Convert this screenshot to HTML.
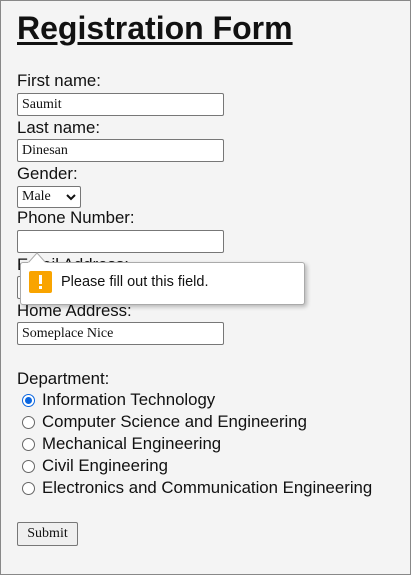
<!DOCTYPE html>
<html><head><style>
html,body{margin:0;padding:0}
body{width:409px;height:573px;border:1px solid #888;background:#f4f4f4;position:relative;overflow:hidden;font-family:"Liberation Sans",sans-serif;font-size:16.8px;color:#111}
.a{position:absolute;white-space:nowrap}
h1{position:absolute;left:16px;top:9px;margin:0;font-size:32px;font-weight:bold;text-decoration:underline;text-decoration-thickness:3px;text-underline-offset:3px}
.in{position:absolute;left:16px;height:21px;border:1px solid #777;border-radius:2px;background:#fff;font-family:"Liberation Serif",serif;font-size:14px;line-height:21px;padding-left:4px;box-sizing:content-box;width:201px}
.rad{position:absolute;left:21px;width:11px;height:11px;border:1px solid #666;border-radius:50%;background:#fff}
.rad.on{border-color:#0a66e0}
.rad.on::after{content:"";position:absolute;left:2px;top:2px;width:7px;height:7px;border-radius:50%;background:#0a66e0}
</style></head><body>
<h1>Registration Form</h1>
<div class="a" style="left:16px;top:70px">First name:</div>
<div class="in" style="top:92px">Saumit</div>
<div class="a" style="left:16px;top:117px">Last name:</div>
<div class="in" style="top:138px">Dinesan</div>
<div class="a" style="left:16px;top:163px">Gender:</div>
<div class="a" style="left:16px;top:185px;border:1px solid #777;border-radius:2px;background:#fff;font-family:'Liberation Serif',serif;font-size:14px;line-height:20px;padding-left:4px;box-sizing:border-box;width:64px;height:22px">Male<svg style="position:absolute;right:4px;top:7px" width="10" height="7" viewBox="0 0 10 7"><path d="M1 1l4 4 4-4" fill="none" stroke="#111" stroke-width="2"/></svg></div>
<div class="a" style="left:16px;top:207px">Phone Number:</div>
<div class="in" style="top:229px"></div>
<div class="a" style="left:16px;top:254px">Email Address:</div>
<div class="in" style="top:275px"></div>
<div class="a" style="left:16px;top:300px">Home Address:</div>
<div class="in" style="top:321px">Someplace Nice</div>
<div class="a" style="left:16px;top:368px">Department:</div>
<div class="rad on" style="top:393px"></div><div class="a" style="left:41px;top:389px">Information Technology</div>
<div class="rad" style="top:415px"></div><div class="a" style="left:41px;top:411px">Computer Science and Engineering</div>
<div class="rad" style="top:437px"></div><div class="a" style="left:41px;top:433px">Mechanical Engineering</div>
<div class="rad" style="top:459px"></div><div class="a" style="left:41px;top:455px">Civil Engineering</div>
<div class="rad" style="top:481px"></div><div class="a" style="left:41px;top:477px">Electronics and Communication Engineering</div>
<div class="a" style="left:16px;top:521px;width:61px;height:24px;border:1px solid #777;border-radius:2px;background:#efefef;box-sizing:border-box;font-family:'Liberation Serif',serif;font-size:14px;line-height:22px;text-align:center">Submit</div>
<div class="a" style="left:19px;top:261px;width:285px;height:43px;background:#fff;border:1px solid #aaa;border-radius:3px;box-shadow:2px 2px 4px rgba(0,0,0,.25);box-sizing:border-box"></div>
<svg class="a" style="left:27px;top:251px" width="20" height="12" viewBox="0 0 20 12"><path d="M0 11L9 1 18 11" fill="#fff" stroke="#aaa"/><rect x="0" y="10.5" width="19" height="2" fill="#fff"/></svg>
<div class="a" style="left:28px;top:270px;width:23px;height:22px;background:#f9a400;border-radius:2px"><div style="position:absolute;left:10px;top:4px;width:3px;height:9px;background:#fff"></div><div style="position:absolute;left:10px;top:15px;width:3px;height:3px;background:#fff"></div></div>
<div class="a" style="left:60px;top:273px;font-size:14.5px">Please fill out this field.</div>
</body></html>
